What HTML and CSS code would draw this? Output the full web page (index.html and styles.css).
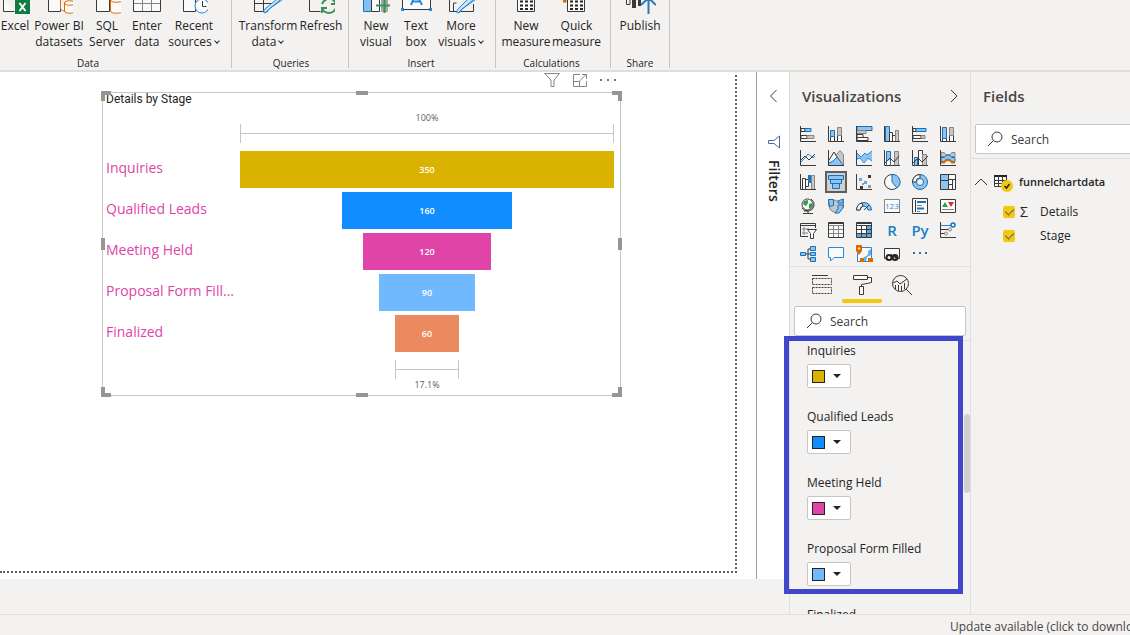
FILE: index.html
```
<!DOCTYPE html>
<html lang="en">
<head>
    <meta charset="UTF-8">
    <meta name="viewport" content="width=device-width, initial-scale=1.0">
    <title>Funnel chart report</title>
    <link rel="stylesheet" href="styles.css">
</head>
<body>
    <header class="ribbon">
        <div class="group group-data">
            <div class="tools">
                <button class="tool">
                    <svg width="30" height="14"><path d="M3.500 0v11.500h11" class="dark paper"/><rect x="15" width="15" height="14" fill="#107c41"/><path d="M19.500 3l6 8M25.500 3l-6 8" stroke="#fff" stroke-width="2"/></svg>
                    <span>Excel</span>
                </button>
                <button class="tool">
                    <svg width="28" height="14"><path d="M3.500 0v11.500h12V0" class="dark paper"/><path d="M15.500 0v9q2 2 4 2M19.500 2.500v8.500c0 3 10 3 10 0V2.500M19.500 3c0 3 10 3 10 0s-10-3-10 0" class="orange paper"/></svg>
                    <span>Power BI<br>datasets</span>
                </button>
                <button class="tool">
                    <svg width="28" height="14"><path d="M3.500 0v11.500h13V0" class="dark paper"/><path d="M17.500 0v11c0 3 12 3 12 0V0M17.500 0c0 3 12 3 12 0" class="orange paper"/></svg>
                    <span>SQL<br>Server</span>
                </button>
                <button class="tool">
                    <svg width="28" height="14"><path d="M.5 0v11.500h27V0" class="dark paper"/><path d="M9.500 0v11M18.500 0v11M1 3.500h26" class="gray"/></svg>
                    <span>Enter<br>data</span>
                </button>
                <button class="tool">
                    <svg width="28" height="14"><path d="M3.500 0v11.500h12V0" class="dark paper"/><circle cx="22" cy="6" r="7" class="blue paper"/><path d="M22.500 1v5.500h4" class="dark"/></svg>
                    <span>Recent<br>sources<i class="arrow"></i></span>
                </button>
            </div>
            <p class="group-name">Data</p>
        </div>
        <div class="group group-queries">
            <div class="tools">
                <button class="tool">
                    <svg width="28" height="14"><path d="M.5 0v11.500h12M.5 3.500h18M9.500 0v11" class="dark"/><path d="M26 0L14 10l-3 3M22 0L12 8q-3 2-2 5 4 0 5-4L28 0" class="blue" fill="#cce4f7"/></svg>
                    <span>Transform<br>data<i class="arrow"></i></span>
                </button>
                <button class="tool">
                    <svg width="28" height="14"><path d="M2.500 0v11.500h11" class="dark"/><path d="M15 4q1-3 5-5M15 8q2 5 7 5t7-5M29 4q-1-3-4-5M15 13V8h5M29 0v4h-5" class="green"/></svg>
                    <span>Refresh</span>
                </button>
            </div>
            <p class="group-name">Queries</p>
        </div>
        <div class="group group-insert">
            <div class="tools">
                <button class="tool">
                    <svg width="28" height="14"><path d="M1.500 0v11.500h8V0" stroke="#1a6fb5" fill="#83c0f0"/><path d="M9.500 0v11.500h8V0" class="dark paper"/><path d="M19 0h7v12h-7z" fill="#a8a8a8"/><path d="M14 5.500h16M22.500 0v13" class="green"/></svg>
                    <span>New<br>visual</span>
                </button>
                <button class="tool">
                    <svg width="32" height="14"><path d="M2.500 0v9.500h28V0" class="dark paper"/><path d="M11 5l5-12 6 12M13 1.500h7" stroke="#2b88d8" stroke-width="2"/><path d="M1 8h3v3H1zM29 8h3v3h-3z" fill="#2b88d8"/></svg>
                    <span>Text<br>box</span>
                </button>
                <button class="tool">
                    <svg width="28" height="14"><path d="M2.500 0v11.500h24V4" class="dark"/><path d="M6.500 11V3h3" class="dark"/><path d="M26 0L14 10l-3 3M20 0L12 8q-3 2-2 5 4 0 5-4L28 0" class="blue" fill="#cce4f7"/></svg>
                    <span>More<br>visuals<i class="arrow"></i></span>
                </button>
            </div>
            <p class="group-name">Insert</p>
        </div>
        <div class="group group-calc">
            <div class="tools">
                <button class="tool">
                    <svg width="28" height="14"><path d="M5.500 0v11.500h17V0" class="dark paper"/><path d="M8 1.500h14M8 5.500h14M8 9h14" stroke="#252423" stroke-width="2" stroke-dasharray="3 2"/></svg>
                    <span>New<br>measure</span>
                </button>
                <button class="tool">
                    <svg width="28" height="14"><path d="M4.500 0v11.500h17V0" class="dark paper"/><path d="M7 1.500h14M7 5.500h14M7 9h14" stroke="#252423" stroke-width="2" stroke-dasharray="3 2"/><path d="M-2 1h4V-1M2 0v-2" stroke="#d86c00" stroke-width="3"/></svg>
                    <span>Quick<br>measure</span>
                </button>
            </div>
            <p class="group-name">Calculations</p>
        </div>
        <div class="group group-share">
            <div class="tools">
                <button class="tool">
                    <svg width="32" height="14"><path d="M2.500 0v4.500H6V0" class="dark"/><path d="M8 0h4v8H8zM14 0h3v6h-3z" fill="#3b3a39"/><path d="M24.500 14V-3M17 5l7.500-7L32 5" stroke="#2b79b8" stroke-width="2"/></svg>
                    <span>Publish</span>
                </button>
            </div>
            <p class="group-name">Share</p>
        </div>
    </header>

    <main class="main">
        <section class="workspace">
            <div class="stage">
                <div class="canvas">
                    <article class="visual">
                        <div class="visual-actions">
                            <button aria-label="Filters"><svg width="16" height="16"><path d="M.5 1.500h15L10 8v6.500H7V8z" class="gray"/></svg></button>
                            <button aria-label="Focus mode"><svg width="16" height="16"><path d="M8 2.500H1.500v12h13V9M1.500 9.500h6v5M7.500 9l6.500-6.500M10 2.500h4.500V7" class="gray"/></svg></button>
                            <button aria-label="More options"><svg width="16" height="16"><path d="M0 7h2v2H0zM7 7h2v2H7zM14 7h2v2h-2z" fill="#777"/></svg></button>
                        </div>
                        <div class="chart">
                            <i class="handle tl"></i><i class="handle tm"></i><i class="handle tr"></i>
                            <i class="handle ml"></i><i class="handle mr"></i>
                            <i class="handle bl"></i><i class="handle bm"></i><i class="handle br"></i>
                            <h2>Details by Stage</h2>
                            <div class="plot">
                                <p class="percent">100%</p>
                                <div class="bracket" style="width: 100%"></div>
                            </div>
                            <ul class="funnel">
                                <li><span class="stage-name">Inquiries</span><div class="track"><b class="bar gold" style="width: 100%">350</b></div></li>
                                <li><span class="stage-name">Qualified Leads</span><div class="track"><b class="bar azure" style="width: 45.7%">160</b></div></li>
                                <li><span class="stage-name">Meeting Held</span><div class="track"><b class="bar pink" style="width: 34.3%">120</b></div></li>
                                <li><span class="stage-name">Proposal Form Fill...</span><div class="track"><b class="bar sky" style="width: 25.7%">90</b></div></li>
                                <li><span class="stage-name">Finalized</span><div class="track"><b class="bar coral" style="width: 17.1%">60</b></div></li>
                            </ul>
                            <div class="plot">
                                <div class="bracket" style="width: 17.1%"></div>
                                <p class="percent">17.1%</p>
                            </div>
                        </div>
                    </article>
                </div>
                <aside class="filters">
                    <button aria-label="Expand filters"><svg width="16" height="16"><path d="M10.500 2l-6 6 6 6" class="dark"/></svg></button>
                    <svg width="16" height="16"><path d="M13.500 2v12L8 9.500H2.500v-3H8z" stroke="#4a6f9b"/></svg>
                    <h2>Filters</h2>
                </aside>
            </div>
            <div class="pages"></div>
        </section>

        <section class="visualizations">
            <div class="pane-header">
                <h2>Visualizations</h2>
                <button aria-label="Collapse"><svg width="16" height="16"><path d="M5 2l6 6-6 6" class="dark"/></svg></button>
            </div>
            <div class="gallery">
                <button aria-label="Stacked bar chart"><svg viewBox="0 0 16 16"><path d="M.5 0v15.500H16" class="dark"/><path d="M1 2.500h4v3H1zM1 9.500h6v3H1z" class="dark paper"/><path d="M5 2.500h6v3H5z" class="bfill"/><path d="M7 9.500h7v3H7z" class="gfill"/></svg></button>
                <button aria-label="Stacked column chart"><svg viewBox="0 0 16 16"><path d="M.5 0v15.500H16" class="dark"/><path d="M2.500 10.500h4v5h-4zM9.500 9.500h4v6h-4z" class="dark paper"/><path d="M2.500 4.500h4v6h-4z" class="bfill"/><path d="M9.500 1.500h4v8h-4z" class="gfill"/></svg></button>
                <button aria-label="Clustered bar chart"><svg viewBox="0 0 16 16"><path d="M1 .5h15v4H1z" class="bfill"/><path d="M1 4.500h9v3H1z" class="gfill"/><path d="M1 8.500h6v3H1zM1 11.500h11v3H1z" class="dark paper"/><path d="M.5 0v15.500H16" class="dark"/></svg></button>
                <button aria-label="Clustered column chart"><svg viewBox="0 0 16 16"><path d="M1.500.5h4v15h-4z" class="bfill"/><path d="M5.500 6.500h3v9h-3zM8.500 9.500h3v6h-3z" class="dark paper"/><path d="M11.500 4.500h3v11h-3z" class="gfill"/><path d="M.5 0v15.500H16" class="dark"/></svg></button>
                <button aria-label="100% stacked bar chart"><svg viewBox="0 0 16 16"><path d="M.5 0v15.500H16" class="dark"/><path d="M1 2.500h3v3H1zM1 9.500h8v3H1z" class="dark paper"/><path d="M4 2.500h10v3H4z" class="bfill"/><path d="M9 9.500h4v3H9z" class="gfill"/></svg></button>
                <button aria-label="100% stacked column chart"><svg viewBox="0 0 16 16"><path d="M.5 0v15.500H16" class="dark"/><path d="M2.500 12.500h4v3h-4zM9.500 9.500h4v6h-4z" class="dark paper"/><path d="M2.500 1.500h4v11h-4z" class="bfill"/><path d="M9.500 1.500h4v8h-4z" class="gfill"/></svg></button>

                <button aria-label="Line chart"><svg viewBox="0 0 16 16"><path d="M.5 0v15.500H16M1 10l4-4 4 4 6-6" class="dark"/><path d="M1 12l4-4 3-4 3 2 2 2 2-2" class="blue"/></svg></button>
                <button aria-label="Area chart"><svg viewBox="0 0 16 16"><path d="M8 5l4-4.500 3.500 4V15" class="gfill"/><path d="M.5 11L6 2l5 8" class="dark paper"/><path d="M.5 15.500v-2L5 11l4-4 6.500 8.500z" class="bfill"/><path d="M.5 0v15.500H16" class="dark"/></svg></button>
                <button aria-label="Stacked area chart"><svg viewBox="0 0 16 16"><path d="M1 3l4 4 4-4 2 2 5-4v10l-4-3-4 4-4-4-3 2z" fill="#8dc4f2"/><path d="M1 3l4 4 4-4 2 2 5-4M1 9l3-1 4 5 4-5 4 3" class="blue"/><path d="M.5 0v15.500H16" class="dark"/></svg></button>
                <button aria-label="Line and stacked column chart"><svg viewBox="0 0 16 16"><path d="M2.500 1.500h4v14h-4z" class="bfill"/><path d="M10.500 1.500h4v14h-4z" class="gfill"/><path d="M3 10.500h3v5H3z" fill="#fff"/><path d="M.5 0v15.500H16M1 13l5-5 4 4 5-6" class="dark"/></svg></button>
                <button aria-label="Line and clustered column chart"><svg viewBox="0 0 16 16"><path d="M2.500 7.500h3v8h-3z" class="bfill"/><path d="M6.500.5h4v15h-4z" class="dark paper"/><path d="M10.500 4.500h4v11h-4z" class="gfill"/><path d="M.5 0v15.500H16M1 13l5-5 4 4 6-6" class="dark"/></svg></button>
                <button aria-label="Ribbon chart"><svg viewBox="0 0 16 16"><path d="M1 2.500h3q4 5 8 0h3v4h-3q-4 4-8 0H1z" class="gfill"/><path d="M1 7.500h3q4-5 8 0h3v4h-3q-4-5-8 0H1z" class="bfill"/><path d="M1 12.500h3q4-5 8 0h3" stroke="#d86c00" stroke-width="2"/><path d="M.5 0v15.500H16" class="dark"/></svg></button>

                <button aria-label="Waterfall chart"><svg viewBox="0 0 16 16"><path d="M2.500 4.500h3v11h-3zM5.500 5.500h3v7h-3z" class="dark paper"/><path d="M8 1h3v8H8z" fill="#1a73bd"/><path d="M11.500 1.500h3v14h-3z" class="gfill"/><path d="M.5 0v15.500H16" class="dark"/></svg></button>
                <button class="selected" aria-label="Funnel chart"><svg viewBox="0 0 16 16"><path d="M.5 1.500h15v4H.5zM2.500 5.500h11v4h-11zM4.500 9.500h7v5h-7z" class="bfill"/></svg></button>
                <button aria-label="Scatter chart"><svg viewBox="0 0 16 16"><path d="M.5 0v15.500H16" class="dark"/><path d="M12 1h3v3h-3zM4 12h3v3H4z" fill="#3b3a39"/><path d="M3 4h3v3H3zM8 7h3v3H8z" fill="#5fa9e6"/><path d="M6 9h2v2H6zM12 11h3v3h-3z" fill="#999"/></svg></button>
                <button aria-label="Pie chart"><svg viewBox="0 0 16 16"><circle cx="8" cy="8" r="7.500" class="dark paper"/><path d="M8 .5V8l5 6A7.500 7.500 0 0 0 8 .5" class="bfill"/></svg></button>
                <button aria-label="Donut chart"><svg viewBox="0 0 16 16"><circle cx="8" cy="8" r="7.500" class="bfill"/><path d="M8 .5A7.500 7.500 0 0 0 .5 8H4a4 4 0 0 1 4-4z" class="dark paper"/><circle cx="8" cy="8" r="3.500" stroke="#1a6fb5" fill="#f3f2f1"/></svg></button>
                <button aria-label="Treemap"><svg viewBox="0 0 16 16"><path d="M.5.5h15v15H.5z" class="dark paper"/><path d="M1 1h7v14H1z" fill="#8dc4f2"/><path d="M8.500 1v14M1 6.500h7M8 5.500h7M12.500 6v9M9 10.500h3" class="dark"/></svg></button>

                <button aria-label="Map"><svg viewBox="0 0 16 16"><path d="M11 1q4 3 3 7t-5 5H4M8 13v2M3 15.500h10M2 10q2 3 6 3" class="dark"/><circle cx="7.500" cy="6.500" r="5.500" class="dark paper"/><path d="M4 3l4-1v3L6 8 3 6zM9 6l3-1v4l-3 2z" fill="#2c9c50"/></svg></button>
                <button aria-label="Filled map"><svg viewBox="0 0 16 16"><path d="M.5 2l4 1 3-1 4 2 4-3v8l-4 5-4 1-5-3-2-5z" class="gfill"/><path d="M.5 1.500h5v6l-4 1zM10 7h5v3l-4 5H7l3-4zM10 3l5-2v4h-5z" class="bfill"/></svg></button>
                <button aria-label="Gauge"><svg viewBox="0 0 16 16"><path d="M.5 12A7.500 7.500 0 0 1 15.500 12H12Q11 8 8 8T4 12z" class="bfill"/><path d="M.5 12Q1 6 6 5l1 3q-3 1-3 4zM8 12l5-5" class="dark paper"/></svg></button>
                <button aria-label="Card"><svg viewBox="0 0 16 16"><path d="M.5 1.500h15v13H.5z" class="gray paper"/><path d="M0 14.500h16" class="dark"/><text x="1" y="11" class="numbers">123</text></svg></button>
                <button aria-label="Multi-row card"><svg viewBox="0 0 16 16"><path d="M.5.5h15v15H.5z" class="dark paper"/><path d="M3.500 2v12" class="dark"/><path d="M5 4h9M5 10.500h7" stroke="#1a73bd" stroke-width="2"/><path d="M5 7.500h5M5 13.500h3" class="gray"/></svg></button>
                <button aria-label="KPI"><svg viewBox="0 0 16 16"><path d="M.5 1.500h15v13H.5z" class="dark paper"/><path d="M2 9l3-5 3 5z" fill="#2c9c50"/><path d="M8 4h6l-3 5z" fill="#d13438"/><path d="M2 11.500h12" class="gray"/></svg></button>

                <button aria-label="Slicer"><svg viewBox="0 0 16 16"><path d="M15.500 6V1.500H.5v13H8M1 3.500h14" class="dark"/><path d="M3 6h2v2H3zM3 10h2v2H3zM6 7h3M6 11h2" class="gray"/><path d="M7.500 7.500h9l-3 4v5h-3v-5z" class="dark paper"/></svg></button>
                <button aria-label="Table"><svg viewBox="0 0 16 16"><path d="M.5.5h15v15H.5z" class="dark paper"/><path d="M1 3.500h14M1 7.500h14M1 11.500h14M5.500 3v12M10.500 3v12" class="gray"/><path d="M.5 1.500h15" class="dark"/></svg></button>
                <button aria-label="Matrix"><svg viewBox="0 0 16 16"><path d="M.5.5h15v15H.5z" class="dark paper"/><path d="M10 3h5v12H1v-4h9z" fill="#5ba7e6"/><path d="M1 3.500h14M1 7.500h14M1 11.500h14M5.500 3v12M10.500 3v12M.5 1.500h15" class="dark"/></svg></button>
                <button class="script" aria-label="R script visual">R</button>
                <button class="script" aria-label="Python visual">Py</button>
                <button aria-label="Key influencers"><svg viewBox="0 0 16 16"><path d="M.5 0v15.500H16M1 7.500h8M1 11.500h4" class="dark"/><path d="M1 3.500h10" class="blue"/><circle cx="13" cy="3" r="2" stroke="#1a73bd" stroke-width="1.500"/><circle cx="10" cy="7.500" r="1.500" class="gray"/><circle cx="6" cy="11.500" r="1.500" class="gray"/></svg></button>

                <button aria-label="Decomposition tree"><svg viewBox="0 0 16 16"><path d="M5 8h6M11 3H8v10h3" class="dark"/><path d="M.5 6.500h5v3h-5zM10.500.5h5v4h-5zM10.500 6.500h5v3h-5zM10.500 11.500h5v4h-5z" class="bfill"/></svg></button>
                <button aria-label="Q&amp;A"><svg viewBox="0 0 16 16"><path d="M.5 1.500h15v10H6L2.500 15v-3.500h-2z" class="blue paper"/></svg></button>
                <button aria-label="Shape map"><svg viewBox="0 0 16 16"><path d="M3 1.500h12.500V12L12 15.500H1.500V8z" class="blue paper"/><path d="M7 15q0-4 3-5t2-5l3-2v6l-4 2-1 4z" fill="#63ade8"/><path d="M0-1h6v6L3 9 0 5zM12 12h5v4h-5zM4 12h4v4H4z" fill="#d86c00"/><circle cx="3" cy="2.500" r="1" fill="#fff"/></svg></button>
                <button aria-label="Paginated report"><svg viewBox="0 0 16 16"><path d="M3 12.500H.5v-10h15v10H13" class="dark paper"/><path d="M9.500 8.500l3 4M6.500 8.500l3 4" stroke="#252423" stroke-width="2"/><circle cx="5" cy="11.500" r="2.500" stroke="#252423" stroke-width="2"/><circle cx="11" cy="11.500" r="2.500" stroke="#252423" stroke-width="2"/></svg></button>
                <button aria-label="Get more visuals"><svg viewBox="0 0 16 16"><path d="M1 6h2v2H1zM7 6h2v2H7zM13 6h2v2h-2z" fill="#46619b"/></svg></button>
            </div>
            <div class="tabs">
                <button aria-label="Fields"><svg width="22" height="22"><path d="M1 1.500h16" class="dark"/><path d="M1.500 4.500h19v6h-19zM1.500 13.500h19v6h-19z" class="dark" stroke-dasharray="2 1"/></svg></button>
                <button class="active" aria-label="Format"><svg width="22" height="22"><path d="M2.500 1.500h14v4h-14zM17 3.500h3.500v5l-10 2v2M8.500 12.500h4v8h-4z" class="dark paper"/></svg></button>
                <button aria-label="Analytics"><svg width="22" height="22"><circle cx="9.500" cy="9.500" r="8" class="dark"/><path d="M15 15l6 6M2 9l4-2 3 3 7-5M4.500 11v4M7.500 11v6M10.500 12v5M13.500 9v6" class="dark"/></svg></button>
            </div>
            <label class="search">
                <svg width="16" height="16"><circle cx="10" cy="6" r="5" class="dark"/><path d="M6.500 9.500L1 15" class="dark"/></svg>
                <input type="text" placeholder="Search" aria-label="Search format options">
            </label>
            <div class="colors">
                <div class="color"><span>Inquiries</span><button aria-label="Inquiries color"><i class="swatch gold"></i></button></div>
                <div class="color"><span>Qualified Leads</span><button aria-label="Qualified Leads color"><i class="swatch azure"></i></button></div>
                <div class="color"><span>Meeting Held</span><button aria-label="Meeting Held color"><i class="swatch pink"></i></button></div>
                <div class="color"><span>Proposal Form Filled</span><button aria-label="Proposal Form Filled color"><i class="swatch sky"></i></button></div>
                <div class="color"><span>Finalized</span><button aria-label="Finalized color"><i class="swatch coral"></i></button></div>
            </div>
            <div class="scroll-thumb"></div>
            <div class="highlight"></div>
        </section>

        <section class="fields">
            <div class="pane-header">
                <h2>Fields</h2>
            </div>
            <label class="search">
                <svg width="16" height="16"><circle cx="10" cy="6" r="5" class="dark"/><path d="M6.500 9.500L1 15" class="dark"/></svg>
                <input type="text" placeholder="Search" aria-label="Search fields">
            </label>
            <div class="tree">
                <div class="table-row">
                    <svg width="14" height="14"><path d="M1 10l6-6 6 6" class="dark"/></svg>
                    <svg width="20" height="20"><path d="M1.500 3.500h12v11h-12z" class="dark paper"/><path d="M1 4h13" stroke="#252423" stroke-width="2"/><path d="M1 8.500h13M1 11.500h13M5.500 4v10M9.500 4v10" class="dark"/><circle cx="14" cy="14" r="6" fill="#f2c811"/><path d="M11.500 14l2 2 3-4" stroke="#252423" stroke-width="1.500"/></svg>
                    <strong>funnelchartdata</strong>
                </div>
                <label class="field"><input type="checkbox" checked><i>Σ</i><span>Details</span></label>
                <label class="field"><input type="checkbox" checked><i></i><span>Stage</span></label>
            </div>
        </section>
    </main>

    <footer class="status">
        <a href="#">Update available (click to download)</a>
    </footer>
</body>
</html>
```
FILE: styles.css
```
*{
    box-sizing: border-box;
}

body{
    margin: 0;
    height: 100vh;
    display: flex;
    flex-direction: column;
    overflow: hidden;
    background: #f3f2f1;
    color: #252423;
    font-family: "Open Sans", "Noto Sans", sans-serif;
    font-size: 12px;
    line-height: 16px;
}

h2, p, ul{
    margin: 0;
    padding: 0;
}

button{
    padding: 0;
    border: 0;
    background: none;
    color: inherit;
    font: inherit;
}

svg{
    display: block;
    flex-shrink: 0;
    fill: none;
}

/* icon strokes and fills */
.dark{ stroke: #3b3a39; }
.gray{ stroke: #858585; }
.blue{ stroke: #2b88d8; }
.green{ stroke: #35964f; stroke-width: 2; }
.orange{ stroke: #d86c00; }
.paper{ fill: #fafafa; }
.bfill{ stroke: #1a6fb5; fill: #8dc4f2; }
.gfill{ stroke: #858585; fill: #c8c6c4; }

.gold{ background: #d9b300; }
.azure{ background: #118dff; }
.pink{ background: #e044a7; }
.sky{ background: #71b9ff; }
.coral{ background: #eb895f; }

/* ribbon */
.ribbon{
    display: flex;
    height: 72px;
    border-bottom: 2px solid #dededd;
    flex-shrink: 0;
}

.group{
    border-right: 1px solid #c8c6c4;
    margin-bottom: 2px;
}

.tools{
    display: grid;
    height: 56px;
}

.group-data{ padding-right: 11px; }
.group-data .tools{ grid-template-columns: 30px 58px 38px 42px 52px; }
.group-data .group-name{ padding-right: 44px; }
.group-queries{ padding: 0 4px 0 6px; }
.group-queries .tools{ grid-template-columns: 60px 46px; }
.group-insert{ padding: 0 9px 0 7px; }
.group-insert .tools{ grid-template-columns: 40px 40px 50px; }
.group-calc{ padding: 0 8px 0 5px; }
.group-calc .tools{ grid-template-columns: 50px 51px; }
.group-share{ padding: 0 5px; }
.group-share .tools{ grid-template-columns: 48px; }

.tool{
    display: flex;
    flex-direction: column;
    align-items: center;
    gap: 4px;
    white-space: nowrap;
}

.group-name{
    text-align: center;
    font-size: 10px;
    line-height: 14px;
}

.arrow{
    display: inline-block;
    width: 4px;
    height: 4px;
    margin: 0 1px 3px 3px;
    border: solid #252423;
    border-width: 0 1px 1px 0;
    transform: rotate(45deg);
}

.main{
    display: flex;
    flex: 1;
    min-height: 0;
}

.workspace{
    flex: 1;
    min-width: 0;
    display: flex;
    flex-direction: column;
}

.stage{
    flex: 1;
    display: flex;
    background: white;
}

.pages{
    height: 35px;
}

.canvas{
    flex: 1;
    margin: 3px 19px 6px 0;
    border: dotted #605e5c;
    border-width: 0 2px 2px 0;
}

/* visual */
.visual{
    width: 519px;
    margin-left: 102px;
}

.visual-actions{
    display: flex;
    justify-content: flex-end;
    align-items: flex-start;
    gap: 12px;
    height: 20px;
    padding-right: 5px;
    margin-top: -3px;
}

.chart{
    position: relative;
    height: 304px;
    border: 1px solid #c8c6c4;
    padding: 0 6px 0 3px;
}

.chart h2{
    font: 400 12px/13px Roboto, sans-serif;
}

.plot{
    margin-left: 134px;
    color: #605e5c;
}

.percent{
    font-size: 9px;
    line-height: 12px;
    text-align: center;
}

.chart h2 + .plot{
    padding: 6px 0 8px;
}

.bracket{
    height: 19px;
    margin: 0 auto;
    border: solid #c8c6c4;
    border-width: 0 1px;
    background: linear-gradient(#c8c6c4, #c8c6c4) center / 100% 1px no-repeat;
}

.funnel{
    list-style: none;
    display: grid;
    grid-template-rows: repeat(5, 1fr);
    gap: 4px;
    height: 200px;
    margin-bottom: 9px;
}

.funnel li{
    display: flex;
}

.stage-name{
    width: 134px;
    align-self: center;
    padding-bottom: 3px;
    font-size: 14px;
    color: #e044a7;
    white-space: nowrap;
}

.track{
    flex: 1;
    display: flex;
    justify-content: center;
}

.bar{
    line-height: 37px;
    font-size: 9px;
    font-weight: 600;
    color: white;
    text-align: center;
}

/* resize handles on the frame */
.handle{
    position: absolute;
    width: 10px;
    height: 10px;
    border: 0 solid #979593;
}

.tl, .tm, .tr{ top: -2px; border-top-width: 4px; }
.bl, .bm, .br{ bottom: -2px; border-bottom-width: 4px; }
.tl, .ml, .bl{ left: -2px; border-left-width: 4px; }
.tr, .mr, .br{ right: -2px; border-right-width: 4px; }
.tm, .bm{ left: calc(50% - 6px); width: 12px; }
.ml, .mr{ top: calc(50% - 6px); height: 12px; }

.filters{
    width: 33px;
    display: flex;
    flex-direction: column;
    align-items: center;
    padding: 16px 0 0 2px;
    border-left: 1px solid #a19f9d;
}

.filters button{
    margin-bottom: 30px;
}

.filters h2{
    writing-mode: vertical-rl;
    margin-top: 10px;
    font-size: 14px;
    font-weight: 600;
    line-height: 20px;
}

/* side panes */
.visualizations{
    position: relative;
    width: 181px;
    display: flex;
    flex-direction: column;
    border-left: 1px solid #e1dfdd;
}

.pane-header{
    display: flex;
    justify-content: space-between;
    align-items: center;
    height: 50px;
    padding: 0 8px 2px 12px;
    flex-shrink: 0;
}

.pane-header h2{
    font-size: 15px;
    font-weight: 600;
    color: #484644;
}

.gallery{
    display: grid;
    grid-template-columns: repeat(6, 28px);
    grid-auto-rows: 24px;
    padding-left: 4px;
    border-bottom: 1px solid #e1dfdd;
}

.gallery button{
    display: flex;
    align-items: center;
    justify-content: center;
}

.gallery svg{
    width: 16px;
    height: 16px;
    overflow: visible;
}

.gallery .selected{
    margin: 1px 3px;
    border: 2px solid #605e5c;
    background: #d2d0ce;
}

.gallery .script{
    color: #1f7fc4;
    font-size: 15px;
    font-weight: 600;
}

.numbers{
    fill: #2b88d8;
    font-size: 8px;
}

.tabs{
    display: flex;
    height: 36px;
    padding-left: 12px;
    flex-shrink: 0;
}

.tabs button{
    width: 40px;
    display: flex;
    justify-content: center;
    padding-top: 7px;
    border-bottom: 4px solid transparent;
    border-radius: 2px;
}

.tabs .active{
    border-bottom-color: #f2c811;
}

.search{
    display: flex;
    align-items: center;
    gap: 8px;
    height: 30px;
    padding-left: 11px;
    border: 1px solid #c8c6c4;
    border-radius: 2px;
    background: white;
    flex-shrink: 0;
}

.search input{
    flex: 1;
    min-width: 0;
    padding: 1px 0 0;
    border: 0;
    background: none;
    font: inherit;
}

.search input::placeholder{
    color: #3b3a39;
}

.visualizations .search{
    margin: 3px 4px 4px;
}

.colors{
    flex: 1;
    min-height: 0;
    overflow: hidden;
    padding: 2px 0 0 17px;
    border-top: 1px solid #e1dfdd;
}

.color{
    display: flex;
    flex-direction: column;
    align-items: flex-start;
    gap: 5px;
    height: 66px;
}

.color button{
    display: flex;
    align-items: center;
    gap: 8px;
    width: 44px;
    height: 24px;
    padding-left: 4px;
    border: 1px solid #c8c6c4;
    border-radius: 2px;
    background: white;
}

.color button::after{
    content: "";
    border: solid transparent;
    border-width: 4px 4px 0;
    border-top-color: #252423;
}

.swatch{
    width: 13px;
    height: 13px;
    border: 1px solid #252423;
}

.scroll-thumb{
    position: absolute;
    top: 342px;
    right: 0;
    width: 6px;
    height: 79px;
    border-radius: 3px;
    background: #d2d0ce;
}

/* callout frame around the color options */
.highlight{
    position: absolute;
    top: 264px;
    left: -6px;
    right: 7px;
    height: 258px;
    border: 5px solid #3f48cc;
}

.fields{
    width: 160px;
    border-left: 1px solid #e1dfdd;
    overflow: hidden;
}

.fields .search{
    margin: 2px -4px 4px 4px;
}

.tree{
    border-top: 1px solid #e1dfdd;
    padding-top: 8px;
}

.table-row{
    display: flex;
    align-items: center;
    height: 30px;
    margin-bottom: 3px;
    padding-left: 3px;
    gap: 5px;
}

.table-row strong{
    font-size: 11px;
    font-weight: 600;
    margin-left: 1px;
}

.field{
    display: flex;
    align-items: center;
    height: 24px;
    padding-left: 32px;
}

.field input{
    appearance: none;
    display: flex;
    justify-content: center;
    width: 12px;
    height: 12px;
    margin: 0;
    border-radius: 2px;
    background: #f2c811;
}

.field input:checked::after{
    content: "";
    width: 4px;
    height: 7px;
    margin-top: 1px;
    border: solid #605e5c;
    border-width: 0 1px 1px 0;
    transform: rotate(45deg);
}

.field i{
    width: 20px;
    margin-left: 5px;
    font-style: normal;
    font-size: 14px;
}

/* status bar */
.status{
    display: flex;
    justify-content: flex-end;
    height: 21px;
    border-top: 1px solid #e1dfdd;
    flex-shrink: 0;
}

.status a{
    width: 180px;
    padding-top: 4px;
    color: #484644;
    text-decoration: none;
    white-space: nowrap;
    overflow: hidden;
}
```
